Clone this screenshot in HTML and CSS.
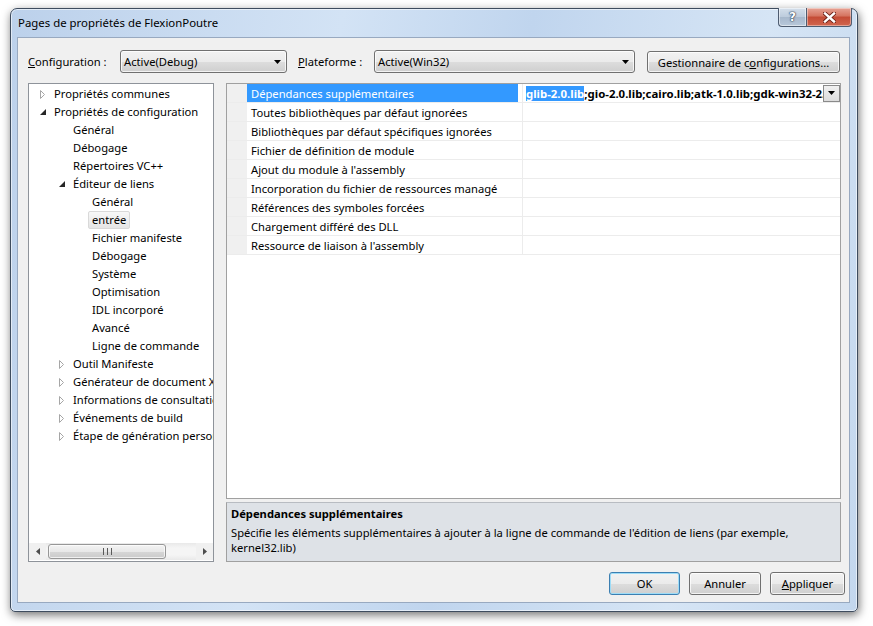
FILE: index.html
```html
<!DOCTYPE html>
<html>
<head>
<meta charset="utf-8">
<title>Pages de propriétés de FlexionPoutre</title>
<link rel="stylesheet" href="styles.css">
</head>
<body>
<div class="window">
  <div class="titlebar">
    <div class="title">Pages de propriétés de FlexionPoutre</div>
    <div class="caption-btns">
      <div class="cbtn help"><span>?</span></div>
      <div class="cbtn close">
        <svg width="13" height="11" viewBox="0 0 13 11">
          <path d="M2 1.5 L11 9.5 M11 1.5 L2 9.5" stroke="#6b1e14" stroke-width="4.2" stroke-linecap="square"/>
          <path d="M2 1.5 L11 9.5 M11 1.5 L2 9.5" stroke="#ffffff" stroke-width="2.4" stroke-linecap="square"/>
        </svg>
      </div>
    </div>
  </div>
  <div class="client">
    <div class="toprow">
      <div class="lbl lbl-config"><u>C</u>onfiguration :</div>
      <div class="combo combo-config"><span>Active(Debug)</span><svg class="carrow" width="7" height="4" viewBox="0 0 7 4"><path d="M0 0H7L3.5 4Z" fill="#000"/></svg></div>
      <div class="lbl lbl-plat"><u>P</u>lateforme :</div>
      <div class="combo combo-plat"><span>Active(Win32)</span><svg class="carrow" width="7" height="4" viewBox="0 0 7 4"><path d="M0 0H7L3.5 4Z" fill="#000"/></svg></div>
      <div class="btn btn-mgr">Gestionnaire de c<u>o</u>nfigurations...</div>
    </div>
    <div class="main">
      <div class="tree">
        <div class="tree-items">
          <div class="trow l0"><span class="exp"><svg width="5" height="9" viewBox="0 0 5 9"><path d="M0.5 0.5 L4.5 4.5 L0.5 8.5Z" fill="#fff" stroke="#a6a6a6"/></svg></span><span class="tl">Propriétés communes</span></div>
          <div class="trow l0"><span class="exp"><svg width="6" height="6" viewBox="0 0 6 6"><path d="M6 0 V6 H0Z" fill="#262626"/></svg></span><span class="tl">Propriétés de configuration</span></div>
          <div class="trow l1"><span class="exp"></span><span class="tl">Général</span></div>
          <div class="trow l1"><span class="exp"></span><span class="tl">Débogage</span></div>
          <div class="trow l1"><span class="exp"></span><span class="tl">Répertoires VC++</span></div>
          <div class="trow l1"><span class="exp"><svg width="6" height="6" viewBox="0 0 6 6"><path d="M6 0 V6 H0Z" fill="#262626"/></svg></span><span class="tl">Éditeur de liens</span></div>
          <div class="trow l2"><span class="exp"></span><span class="tl">Général</span></div>
          <div class="trow l2"><span class="exp"></span><span class="tl sel">entrée</span></div>
          <div class="trow l2"><span class="exp"></span><span class="tl">Fichier manifeste</span></div>
          <div class="trow l2"><span class="exp"></span><span class="tl">Débogage</span></div>
          <div class="trow l2"><span class="exp"></span><span class="tl">Système</span></div>
          <div class="trow l2"><span class="exp"></span><span class="tl">Optimisation</span></div>
          <div class="trow l2"><span class="exp"></span><span class="tl">IDL incorporé</span></div>
          <div class="trow l2"><span class="exp"></span><span class="tl">Avancé</span></div>
          <div class="trow l2"><span class="exp"></span><span class="tl">Ligne de commande</span></div>
          <div class="trow l1"><span class="exp"><svg width="5" height="9" viewBox="0 0 5 9"><path d="M0.5 0.5 L4.5 4.5 L0.5 8.5Z" fill="#fff" stroke="#a6a6a6"/></svg></span><span class="tl">Outil Manifeste</span></div>
          <div class="trow l1"><span class="exp"><svg width="5" height="9" viewBox="0 0 5 9"><path d="M0.5 0.5 L4.5 4.5 L0.5 8.5Z" fill="#fff" stroke="#a6a6a6"/></svg></span><span class="tl">Générateur de document XML</span></div>
          <div class="trow l1"><span class="exp"><svg width="5" height="9" viewBox="0 0 5 9"><path d="M0.5 0.5 L4.5 4.5 L0.5 8.5Z" fill="#fff" stroke="#a6a6a6"/></svg></span><span class="tl">Informations de consultation</span></div>
          <div class="trow l1"><span class="exp"><svg width="5" height="9" viewBox="0 0 5 9"><path d="M0.5 0.5 L4.5 4.5 L0.5 8.5Z" fill="#fff" stroke="#a6a6a6"/></svg></span><span class="tl">Événements de build</span></div>
          <div class="trow l1"><span class="exp"><svg width="5" height="9" viewBox="0 0 5 9"><path d="M0.5 0.5 L4.5 4.5 L0.5 8.5Z" fill="#fff" stroke="#a6a6a6"/></svg></span><span class="tl">Étape de génération personnalisée</span></div>
        </div>
        <div class="hscroll">
          <div class="sbtn"><svg width="4" height="7" viewBox="0 0 4 7"><path d="M4 0V7L0 3.5Z" fill="#4d4d4d"/></svg></div>
          <div class="strack">
            <div class="sthumb"><svg width="9" height="7" viewBox="0 0 9 7"><path d="M0.5 0V7M4.5 0V7M8.5 0V7" stroke="#5a5a5a"/></svg></div>
          </div>
          <div class="sbtn"><svg width="4" height="7" viewBox="0 0 4 7"><path d="M0 0V7L4 3.5Z" fill="#4d4d4d"/></svg></div>
        </div>
      </div>
      <div class="rightpane">
        <div class="grid">
          <div class="grow">
            <div class="gutter"></div>
            <div class="gname"><span class="gsel">Dépendances supplémentaires</span></div>
            <div class="gval gedit">
              <div class="gvtext"><span class="vsel">glib-2.0.lib</span><span class="caret"></span>;gio-2.0.lib;cairo.lib;atk-1.0.lib;gdk-win32-2.0.lib;gdk_pixbuf-2.0.lib</div>
              <div class="gdrop"><svg width="7" height="4" viewBox="0 0 7 4"><path d="M0 0H7L3.5 4Z" fill="#000"/></svg></div>
            </div>
          </div>
          <div class="grow"><div class="gutter"></div><div class="gname"><span>Toutes bibliothèques par défaut ignorées</span></div><div class="gval"></div></div>
          <div class="grow"><div class="gutter"></div><div class="gname"><span>Bibliothèques par défaut spécifiques ignorées</span></div><div class="gval"></div></div>
          <div class="grow"><div class="gutter"></div><div class="gname"><span>Fichier de définition de module</span></div><div class="gval"></div></div>
          <div class="grow"><div class="gutter"></div><div class="gname"><span>Ajout du module à l'assembly</span></div><div class="gval"></div></div>
          <div class="grow"><div class="gutter"></div><div class="gname"><span>Incorporation du fichier de ressources managé</span></div><div class="gval"></div></div>
          <div class="grow"><div class="gutter"></div><div class="gname"><span>Références des symboles forcées</span></div><div class="gval"></div></div>
          <div class="grow"><div class="gutter"></div><div class="gname"><span>Chargement différé des DLL</span></div><div class="gval"></div></div>
          <div class="grow"><div class="gutter"></div><div class="gname"><span>Ressource de liaison à l'assembly</span></div><div class="gval"></div></div>
        </div>
        <div class="desc">
          <div class="dtitle">Dépendances supplémentaires</div>
          <div class="dtext">Spécifie les éléments supplémentaires à ajouter à la ligne de commande de l'édition de liens (par exemple,<br>kernel32.lib)</div>
        </div>
      </div>
    </div>
    <div class="buttons">
      <div class="btn btn-ok">OK</div>
      <div class="btn btn-cancel">Annuler</div>
      <div class="btn btn-apply"><u>A</u>ppliquer</div>
    </div>
  </div>
</div>
</body>
</html>
```

FILE: styles.css
```css
html, body {
  margin: 0;
  padding: 0;
}
body {
  width: 873px;
  height: 626px;
  overflow: hidden;
  background: #ffffff;
  font-family: "Noto Sans", "Open Sans", sans-serif;
  font-size: 11.2px;
  color: #000;
}

.window {
  margin: 8px 0 0 10px;
  width: 848px;
  height: 604px;
  box-sizing: border-box;
  border: 1px solid #3e4c5e;
  border-radius: 7px 7px 5px 5px;
  background: linear-gradient(100deg, #bcd1eb 0%, #d3e3f5 35%, #c0d5ee 55%, #d6e5f5 80%, #c3d7ee 100%);
  box-shadow: 1px 3px 10px rgba(0, 0, 0, 0.55), inset 0 0 0 1px rgba(255, 255, 255, 0.55);
  padding: 0 7px 8px 6px;
  display: flex;
  flex-direction: column;
}

.titlebar {
  height: 28px;
  display: flex;
  justify-content: space-between;
  align-items: flex-start;
}
.title {
  margin-top: 6px;
  padding-left: 1px;
  line-height: 16px;
  font-size: 11.4px;
  color: #000;
}
.caption-btns {
  display: flex;
  margin-top: -1px;
  margin-right: -2px;
}
.cbtn {
  height: 19px;
  box-sizing: border-box;
  border: 1px solid #4e5c70;
  border-top: none;
  display: flex;
  align-items: center;
  justify-content: center;
}
.cbtn.help {
  width: 28px;
  border-radius: 0 0 0 4px;
  border-right: none;
  background: linear-gradient(#d4dfeb 0%, #bccbdc 50%, #a7b8cc 51%, #b8c8da 100%);
  box-shadow: inset 0 0 0 1px rgba(255, 255, 255, 0.5);
}
.cbtn.help span {
  font-family: "DejaVu Sans", sans-serif;
  font-weight: bold;
  font-size: 12px;
  color: #fff;
  text-shadow: 0 0 1px #2c3e55, 0 0 1px #2c3e55, 0 0 2px #2c3e55;
  line-height: 12px;
}
.cbtn.close {
  width: 46px;
  border-radius: 0 0 4px 0;
  background: linear-gradient(#e7a395 0%, #d5735f 45%, #c44b35 50%, #d1664f 100%);
  box-shadow: inset 0 0 0 1px rgba(255, 255, 255, 0.4);
}

.client {
  flex: 1;
  box-sizing: border-box;
  border: 1px solid #98a9c0;
  background: #f0f0f0;
  padding: 12px 0 0 10px;
  display: flex;
  flex-direction: column;
}

.toprow {
  display: flex;
  align-items: center;
  height: 23px;
}
.lbl {
  line-height: 16px;
  white-space: nowrap;
}
.lbl-config { width: 92px; }
.lbl-plat { width: 76px; margin-left: 11px; }

.combo, .btn {
  box-sizing: border-box;
  height: 23px;
  border: 1px solid #707070;
  border-radius: 3px;
  background: linear-gradient(#f2f2f2 0%, #ebebeb 50%, #dddddd 51%, #cfcfcf 100%);
  box-shadow: inset 0 0 0 1px rgba(255, 255, 255, 0.75);
  display: flex;
  align-items: center;
  white-space: nowrap;
}
.combo {
  justify-content: space-between;
  padding: 0 5px 0 3px;
}
.combo-config { width: 167px; }
.combo-plat { width: 261px; }
.btn {
  justify-content: center;
}
.btn-mgr {
  width: 193px;
  height: 22px;
  margin-left: 12px;
  margin-top: 1px;
}

.main {
  display: flex;
  margin-top: 10px;
  height: 479px;
}

.tree {
  width: 186px;
  box-sizing: border-box;
  border: 1px solid #8e939a;
  background: #fff;
  display: flex;
  flex-direction: column;
}
.tree-items {
  flex: 1;
  overflow: hidden;
}
.trow {
  height: 18px;
  display: flex;
  align-items: flex-start;
  padding-top: 2px;
  white-space: nowrap;
  box-sizing: border-box;
}
.trow.l0 { padding-left: 8px; }
.trow.l1 { padding-left: 27px; }
.trow.l2 { padding-left: 46px; }
.exp {
  width: 17px;
  flex: none;
  display: flex;
  align-items: center;
  padding-left: 3px;
  box-sizing: border-box;
  height: 16px;
}
.exp svg { display: block; }
.tl {
  line-height: 16px;
}
.tl.sel {
  margin-left: -4px;
  margin-top: -1px;
  padding: 0 3px;
  border: 1px solid #d9d9d9;
  border-radius: 2px;
  background: linear-gradient(#f8f8f8, #e5e5e5);
}

.hscroll {
  height: 17px;
  display: flex;
  background: #f0f0f0;
  margin-bottom: 1px;
}
.sbtn {
  width: 17px;
  display: flex;
  align-items: center;
  justify-content: center;
}
.strack {
  flex: 1;
  display: flex;
  align-items: stretch;
  padding: 1px 0;
  background: linear-gradient(#e9e9e9, #f5f5f5 30%, #f5f5f5 70%, #e9e9e9);
}
.sthumb {
  width: 118px;
  margin-left: 2px;
  box-sizing: border-box;
  border: 1px solid #979797;
  border-radius: 3px;
  background: linear-gradient(#f3f3f3 0%, #e8e8e8 50%, #d6d6d6 51%, #cbcbcb 100%);
  box-shadow: inset 0 0 0 1px rgba(255, 255, 255, 0.7);
  display: flex;
  align-items: center;
  justify-content: center;
}

.rightpane {
  width: 615px;
  margin-left: 12px;
  display: flex;
  flex-direction: column;
}
.grid {
  height: 416px;
  box-sizing: border-box;
  border: 1px solid #a0a0a0;
  background: #fff;
}
.grow {
  display: flex;
  height: 19px;
  box-sizing: border-box;
  border-bottom: 1px solid #ececec;
}
.gutter {
  width: 20px;
  flex: none;
  background: #f0f0f0;
}
.gname {
  width: 275px;
  flex: none;
  display: flex;
  align-items: stretch;
  white-space: nowrap;
  overflow: hidden;
}
.gname span {
  display: block;
  padding: 2px 0 0 4px;
  width: 271px;
  box-sizing: border-box;
  line-height: 16px;
}
.gname .gsel {
  background: #3399ff;
  color: #fff;
}
.gval {
  flex: 1;
  border-left: 1px solid #ececec;
  display: flex;
  align-items: center;
  overflow: hidden;
  white-space: nowrap;
  min-width: 0;
}
.gedit {
  padding-left: 3px;
}
.gvtext {
  flex: 1;
  overflow: hidden;
  font-weight: bold;
  font-size: 11.4px;
  line-height: 15px;
  display: flex;
  align-items: center;
  min-width: 0;
  padding-top: 1px;
}
.vsel {
  background: #3399ff;
  color: #fff;
}
.caret {
  display: inline-block;
  width: 1px;
  height: 15px;
  background: #000;
}
.gdrop {
  width: 17px;
  height: 17px;
  flex: none;
  box-sizing: border-box;
  border: 1px solid #8a8a8a;
  background: linear-gradient(#f0f0f0, #dcdcdc);
  display: flex;
  align-items: center;
  justify-content: center;
}

.desc {
  margin-top: 3px;
  flex: 1;
  box-sizing: border-box;
  border: 1px solid #a0a0a0;
  border-top-color: #b8bcc2;
  background: #dee2e7;
  padding: 3px 4px 0 4px;
}
.dtitle {
  font-weight: bold;
  line-height: 16px;
  margin-bottom: 3px;
}
.dtext {
  line-height: 15px;
}

.buttons {
  display: flex;
  justify-content: flex-end;
  gap: 9px;
  margin-top: 10px;
  margin-right: 4px;
}
.btn-ok { width: 71px; border-color: #3c7fb1; box-shadow: inset 0 0 0 1px #9ddcf7; }
.btn-cancel { width: 72px; }
.btn-apply { width: 75px; }
```
